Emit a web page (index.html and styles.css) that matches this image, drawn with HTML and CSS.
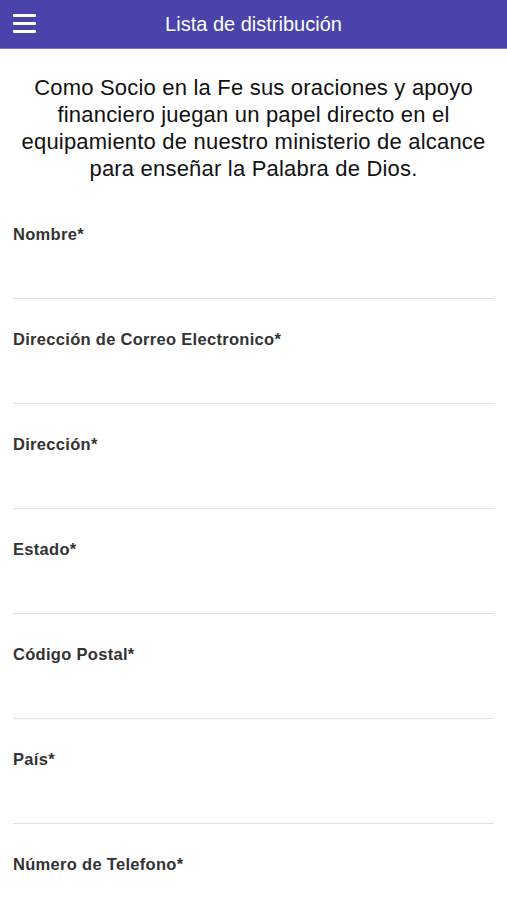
FILE: index.html
```html
<!DOCTYPE html>
<html lang="es">
<head>
    <meta charset="UTF-8">
    <title>Lista de distribución</title>
    <link rel="stylesheet" href="styles.css">
</head>
<body>
<div class="topbar">
    <span class="menu"><i></i><i></i><i></i></span>
    <h1>Lista de distribución</h1>
</div>
<p class="intro">Como Socio en la Fe sus oraciones y apoyo financiero juegan un papel directo en el equipamiento de nuestro ministerio de alcance para enseñar la Palabra de Dios.</p>
<form class="form">
    <label class="field"><span>Nombre*</span><input type="text"></label>
    <label class="field"><span>Dirección de Correo Electronico*</span><input type="text"></label>
    <label class="field"><span>Dirección*</span><input type="text"></label>
    <label class="field"><span>Estado*</span><input type="text"></label>
    <label class="field"><span>Código Postal*</span><input type="text"></label>
    <label class="field"><span>País*</span><input type="text"></label>
    <label class="field"><span>Número de Telefono*</span><input type="text"></label>
</form>
</body>
</html>
```
FILE: styles.css
```css
* {
    padding: 0;
    margin: 0;
    box-sizing: border-box;
}

body {
    font-family: "Liberation Sans", Arial, sans-serif;
    background: #fff;
    color: #111;
}

.topbar {
    height: 49px;
    background: #4a43ab;
    border-bottom: 1px solid #7b72dc;
    display: flex;
    align-items: center;
    justify-content: center;
    position: relative;
}

.topbar h1 {
    font-size: 20px;
    font-weight: normal;
    color: #fff;
}

.menu {
    position: absolute;
    left: 13px;
    top: 14px;
    width: 23px;
    display: flex;
    flex-direction: column;
    gap: 5px;
}

.menu i {
    display: block;
    height: 3px;
    background: #fff;
    border-radius: 1px;
}

.intro {
    font-size: 22px;
    line-height: 27px;
    letter-spacing: 0.2px;
    text-align: center;
    padding: 0 18px;
    margin: 25px 0 12px;
}

.form {
    padding: 0 13px;
}

.field {
    display: block;
    padding-top: 30px;
}

.field span {
    display: block;
    font-size: 16.5px;
    line-height: 20px;
    letter-spacing: 0.3px;
    font-weight: bold;
    color: #333;
}

.field input {
    display: block;
    width: 100%;
    height: 55px;
    border: 0;
    border-bottom: 1px solid #e2e2e2;
    outline: none;
    font: inherit;
}
```
